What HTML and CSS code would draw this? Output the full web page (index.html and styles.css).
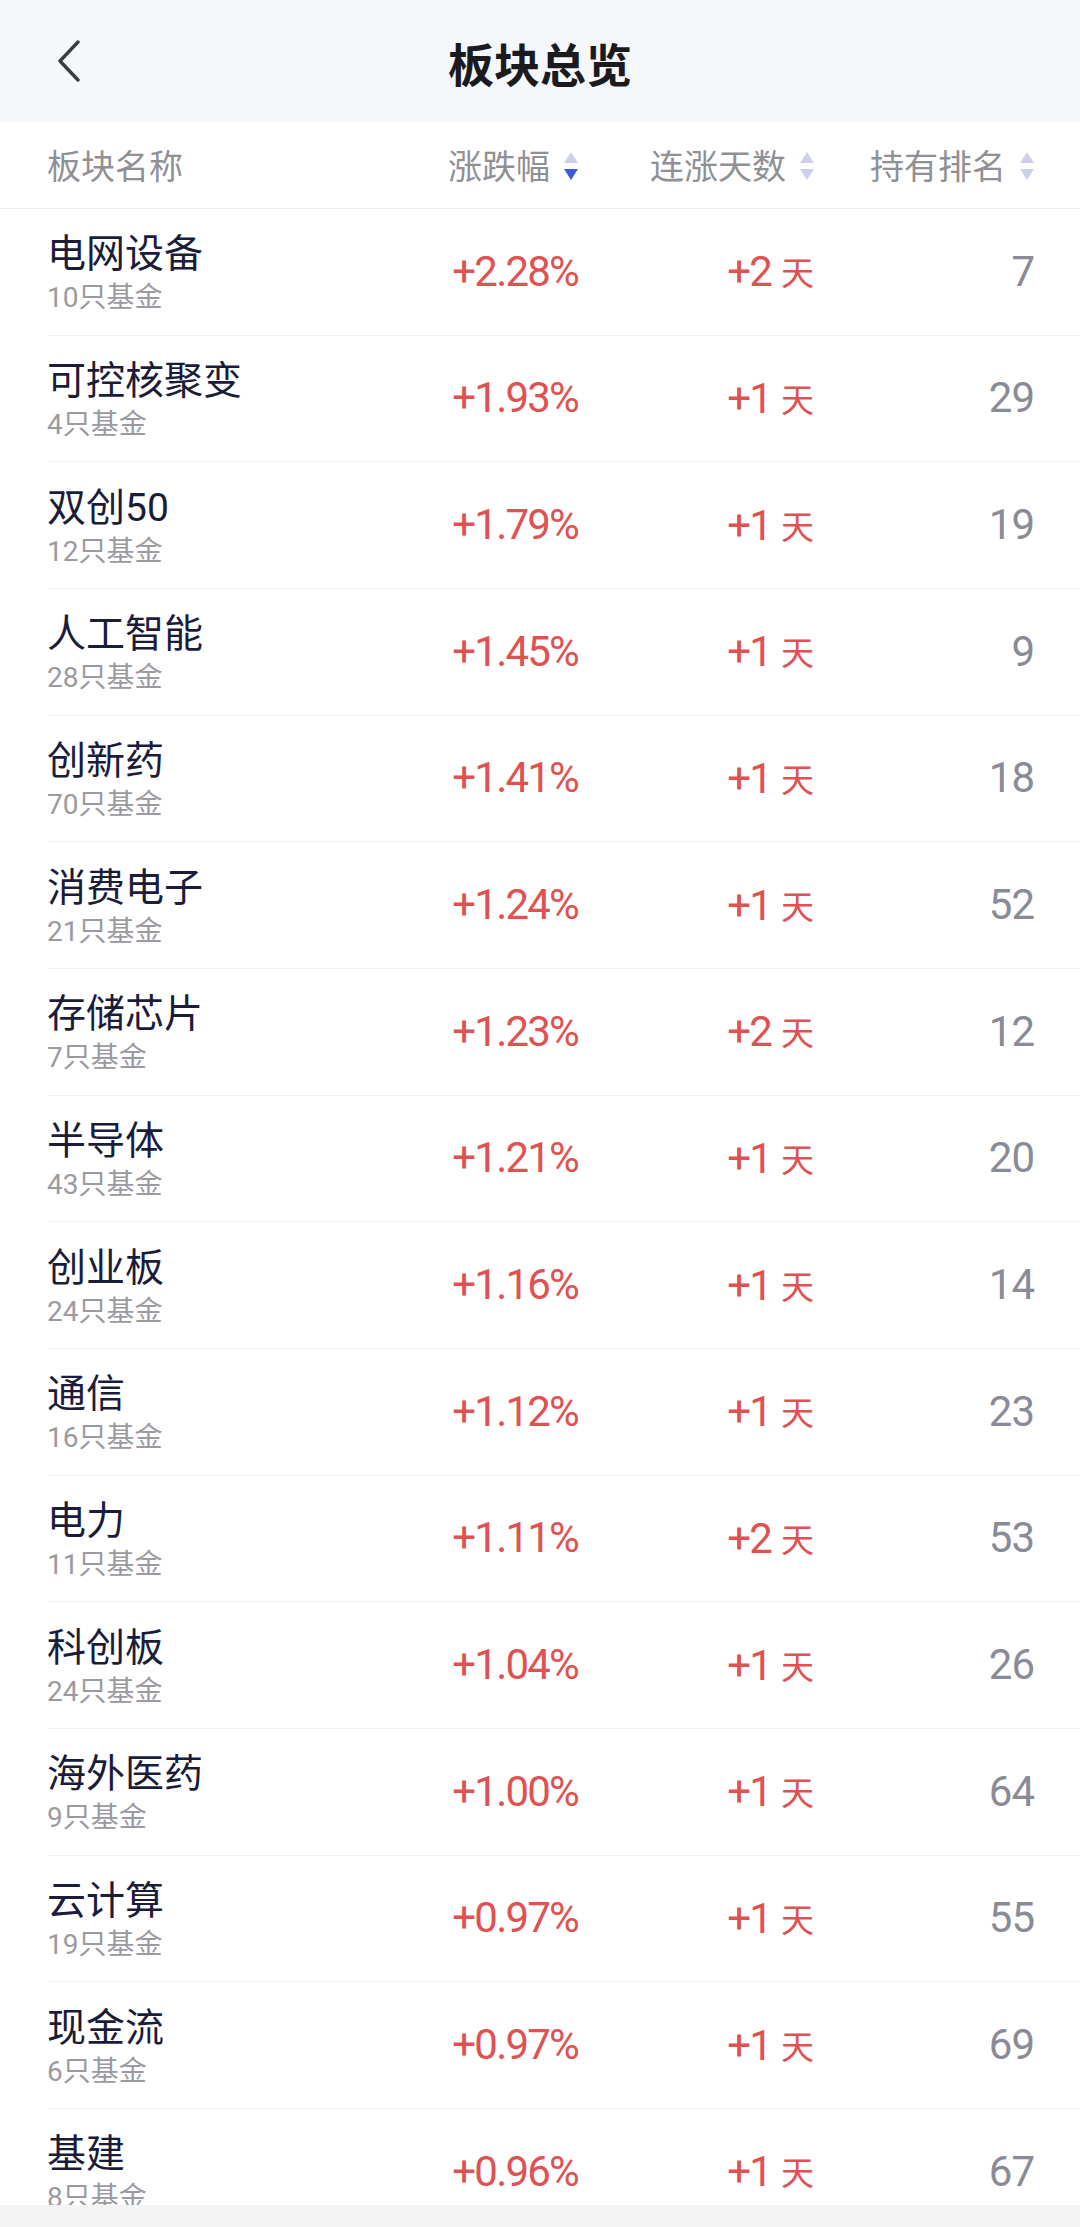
FILE: index.html
```html
<!DOCTYPE html>
<html lang="zh-CN">
<head>
<meta charset="utf-8">
<title>板块总览</title>
<link rel="stylesheet" href="styles.css">
</head>
<body>
<div class="page">
  <header class="topbar">
    <span class="back">
      <svg width="26" height="42" viewBox="0 0 26 42"><path d="M22 2 L4 21 L22 40" fill="none" stroke="#3b3c42" stroke-width="3.4" stroke-linecap="round" stroke-linejoin="round"/></svg>
    </span>
    <h1 class="title">板块总览</h1>
  </header>

  <div class="colhead">
    <div class="ch ch-name">板块名称</div>
    <div class="ch">涨跌幅<span class="sort"><i class="up"></i><i class="down active"></i></span></div>
    <div class="ch">连涨天数<span class="sort"><i class="up"></i><i class="down"></i></span></div>
    <div class="ch">持有排名<span class="sort"><i class="up"></i><i class="down"></i></span></div>
  </div>

  <ul class="list">
    <li class="row"><div class="name"><div class="n">电网设备</div><div class="s">10只基金</div></div><div class="v">+2.28%</div><div class="v">+2<span class="d">天</span></div><div class="r">7</div></li>
    <li class="row"><div class="name"><div class="n">可控核聚变</div><div class="s">4只基金</div></div><div class="v">+1.93%</div><div class="v">+1<span class="d">天</span></div><div class="r">29</div></li>
    <li class="row"><div class="name"><div class="n">双创50</div><div class="s">12只基金</div></div><div class="v">+1.79%</div><div class="v">+1<span class="d">天</span></div><div class="r">19</div></li>
    <li class="row"><div class="name"><div class="n">人工智能</div><div class="s">28只基金</div></div><div class="v">+1.45%</div><div class="v">+1<span class="d">天</span></div><div class="r">9</div></li>
    <li class="row"><div class="name"><div class="n">创新药</div><div class="s">70只基金</div></div><div class="v">+1.41%</div><div class="v">+1<span class="d">天</span></div><div class="r">18</div></li>
    <li class="row"><div class="name"><div class="n">消费电子</div><div class="s">21只基金</div></div><div class="v">+1.24%</div><div class="v">+1<span class="d">天</span></div><div class="r">52</div></li>
    <li class="row"><div class="name"><div class="n">存储芯片</div><div class="s">7只基金</div></div><div class="v">+1.23%</div><div class="v">+2<span class="d">天</span></div><div class="r">12</div></li>
    <li class="row"><div class="name"><div class="n">半导体</div><div class="s">43只基金</div></div><div class="v">+1.21%</div><div class="v">+1<span class="d">天</span></div><div class="r">20</div></li>
    <li class="row"><div class="name"><div class="n">创业板</div><div class="s">24只基金</div></div><div class="v">+1.16%</div><div class="v">+1<span class="d">天</span></div><div class="r">14</div></li>
    <li class="row"><div class="name"><div class="n">通信</div><div class="s">16只基金</div></div><div class="v">+1.12%</div><div class="v">+1<span class="d">天</span></div><div class="r">23</div></li>
    <li class="row"><div class="name"><div class="n">电力</div><div class="s">11只基金</div></div><div class="v">+1.11%</div><div class="v">+2<span class="d">天</span></div><div class="r">53</div></li>
    <li class="row"><div class="name"><div class="n">科创板</div><div class="s">24只基金</div></div><div class="v">+1.04%</div><div class="v">+1<span class="d">天</span></div><div class="r">26</div></li>
    <li class="row"><div class="name"><div class="n">海外医药</div><div class="s">9只基金</div></div><div class="v">+1.00%</div><div class="v">+1<span class="d">天</span></div><div class="r">64</div></li>
    <li class="row"><div class="name"><div class="n">云计算</div><div class="s">19只基金</div></div><div class="v">+0.97%</div><div class="v">+1<span class="d">天</span></div><div class="r">55</div></li>
    <li class="row"><div class="name"><div class="n">现金流</div><div class="s">6只基金</div></div><div class="v">+0.97%</div><div class="v">+1<span class="d">天</span></div><div class="r">69</div></li>
    <li class="row"><div class="name"><div class="n">基建</div><div class="s">8只基金</div></div><div class="v">+0.96%</div><div class="v">+1<span class="d">天</span></div><div class="r">67</div></li>
  </ul>

  <div class="bottombar"></div>
</div>
</body>
</html>
```

FILE: styles.css
```css
* { box-sizing: border-box; }
html, body { margin: 0; padding: 0; }
body {
  background: #ffffff;
  font-family: Roboto, "Noto Sans CJK SC", sans-serif;
  width: 1080px;
  height: 2227px;
  overflow: hidden;
}
.page {
  position: relative;
  width: 1080px;
  height: 2227px;
  overflow: hidden;
}
.topbar {
  height: 122px;
  background: #f6f7fb;
  display: flex;
  align-items: center;
  justify-content: center;
  position: relative;
}
.back {
  position: absolute;
  left: 56px;
  top: 40px;
  width: 26px;
  height: 42px;
  display: flex;
}
.title {
  margin: 0;
  font-family: "Noto Sans CJK SC", sans-serif;
  font-size: 46px;
  font-weight: 700;
  color: #1b1b1f;
  letter-spacing: 0;
  line-height: 60px;
  padding-top: 2px;
}
.colhead {
  height: 87px;
  display: grid;
  grid-template-columns: 1fr 140px 236px 220px;
  align-items: center;
  padding: 0 46px 0 47px;
  border-bottom: 1px solid #ececee;
}
.ch {
  font-family: "Noto Sans CJK SC", sans-serif;
  font-size: 34px;
  color: #909095;
  display: flex;
  justify-content: flex-end;
  align-items: center;
  white-space: nowrap;
  line-height: 44px;
}
.ch-name { justify-content: flex-start; }
.sort {
  display: flex;
  flex-direction: column;
  gap: 6px;
  margin-left: 14px;
  width: 14px;
  align-items: center;
  padding-top: 2px;
}
.sort i {
  display: block;
  width: 0;
  height: 0;
  border-left: 7px solid transparent;
  border-right: 7px solid transparent;
}
.sort .up { border-bottom: 11px solid #cdd0e8; }
.sort .down { border-top: 11px solid #cdd0e8; }
.sort .down.active { border-top-color: #3f5bd4; }

.list {
  list-style: none;
  margin: 0;
  padding: 0;
}
.row {
  height: 126.67px;
  display: grid;
  grid-template-columns: 1fr 140px 236px 220px;
  align-items: center;
  padding: 0 46px 0 0;
  margin-left: 47px;
  border-bottom: 1px solid #f1f1f3;
}
.name { display: flex; flex-direction: column; padding-top: 4px; }
.n {
  font-family: Roboto, "Noto Sans CJK SC", sans-serif;
  font-size: 39px;
  color: #1a1c3a;
  line-height: 48px;
  white-space: nowrap;
}
.s {
  font-family: Roboto, "Noto Sans CJK SC", sans-serif;
  font-size: 28px;
  color: #9a9aa0;
  line-height: 38px;
  padding-top: 1px;
  white-space: nowrap;
}
.v, .r {
  font-family: Roboto, sans-serif;
  font-size: 42px;
  letter-spacing: -1.8px;
  text-align: right;
  line-height: 50px;
  white-space: nowrap;
}
.v { color: #e05151; }
.r { color: #898b96; letter-spacing: -1px; }
.d {
  font-family: "Noto Sans CJK SC", sans-serif;
  font-size: 33px;
  letter-spacing: 0;
  margin-left: 10px;
  vertical-align: 1px;
}
.bottombar {
  position: absolute;
  left: 0;
  right: 0;
  bottom: 0;
  height: 22px;
  background: #f4f4f5;
}
```
